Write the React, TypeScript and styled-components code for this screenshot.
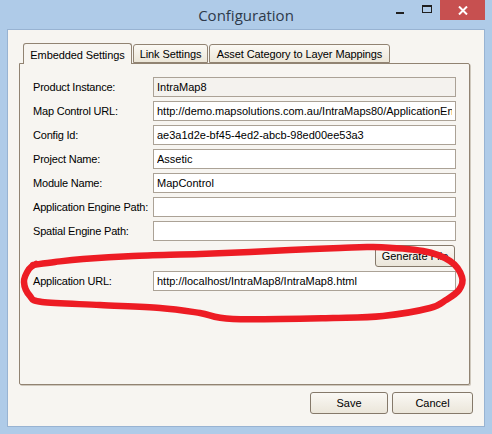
import React from 'react';
import styled, { createGlobalStyle } from 'styled-components';

const Global = createGlobalStyle`
  html, body { margin: 0; padding: 0; width: 492px; height: 434px; overflow: hidden; background: #afcbe8; }
  #root { width: 492px; height: 434px; }
  * { box-sizing: border-box; }
`;

const Window = styled.div`
  position: relative;
  width: 492px;
  height: 434px;
  background: #afcbe8;
  display: flex;
  flex-direction: column;
  font-family: "Liberation Sans", Arial, sans-serif;
  font-size: 11px;
  color: #000;
`;

const TitleBar = styled.div`
  height: 29px;
  flex: none;
  display: grid;
  grid-template-columns: 1fr auto 1fr;
  align-items: start;
`;

const Title = styled.div`
  grid-column: 2;
  font-family: "Open Sans", "Noto Sans", sans-serif;
  font-size: 15px;
  line-height: 20px;
  padding-top: 5px;
  color: #2e3a4a;
`;

const Controls = styled.div`
  grid-column: 3;
  justify-self: end;
  display: flex;
  margin-right: 7px;
`;

const CtlButton = styled.div<{ $close?: boolean }>`
  width: ${p => (p.$close ? 45 : 27)}px;
  height: 20px;
  display: flex;
  align-items: center;
  justify-content: center;
  background: ${p => (p.$close ? '#c75050' : 'transparent')};
`;

const MinGlyph = styled.div`
  width: 8px;
  height: 2px;
  margin-top: 5px;
  background: #1f1f1f;
`;

const MaxGlyph = styled.div`
  width: 10px;
  height: 8px;
  margin-top: -2px;
  border: 1px solid #1f1f1f;
  border-top-width: 2px;
`;

const Client = styled.div`
  flex: 1;
  margin: 0 7px 7px 7px;
  background: #f7f5f1;
  border: 1px solid #98b3d2;
  display: flex;
  flex-direction: column;
  padding: 13px 11px 12px 11px;
`;

const TabStrip = styled.div`
  display: flex;
  align-items: flex-end;
  height: 20px;
  padding-left: 4px;
  gap: 1px;
  position: relative;
  z-index: 1;
`;

const Tab = styled.div<{ $active?: boolean; $w: number }>`
  width: ${p => p.$w}px;
  height: ${p => (p.$active ? 21 : 19)}px;
  margin-bottom: ${p => (p.$active ? -1 : 0)}px;
  border: 1px solid #918372;
  border-bottom: ${p => (p.$active ? 'none' : '1px solid #918372')};
  border-radius: 3px 3px 0 0;
  background: ${p => (p.$active ? '#f7f5f1' : 'linear-gradient(#fbf9f4, #ece6d8)')};
  display: flex;
  align-items: center;
  justify-content: center;
  padding-top: ${p => (p.$active ? 1 : 0)}px;
  white-space: nowrap;
  letter-spacing: -0.1px;
`;

const Panel = styled.div`
  flex: 1;
  margin-right: 3px;
  border: 1px solid #918372;
  border-radius: 0 2px 2px 2px;
  background: #f7f5f1;
  box-shadow: 1px 1px 0 #cfc8bd;
  padding: 13px 13px 0 13px;
  display: flex;
  flex-direction: column;
  gap: 4px;
`;

const Row = styled.div`
  display: grid;
  grid-template-columns: 120px 1fr;
  align-items: center;
  height: 20px;
`;

const Label = styled.span`
  white-space: nowrap;
  letter-spacing: -0.2px;
`;

const Field = styled.input<{ $disabled?: boolean }>`
  height: 20px;
  width: 100%;
  margin: 0;
  border: 1px solid #aba296;
  border-radius: 0;
  outline: none;
  padding: 0 3px;
  font-family: "Liberation Sans", Arial, sans-serif;
  font-size: 11px;
  color: #000;
  background: ${p => (p.$disabled ? '#f4f2ee' : '#ffffff')};
`;

const ActionRow = styled.div`
  display: flex;
  justify-content: flex-end;
  padding-right: 1px;
`;

const Button = styled.div<{ $w: number }>`
  width: ${p => p.$w}px;
  height: 22px;
  border: 1px solid #85796a;
  border-radius: 3px;
  background: linear-gradient(#faf8f4, #ebe6da);
  display: flex;
  align-items: center;
  justify-content: center;
  white-space: nowrap;
`;

const Footer = styled.div`
  display: flex;
  justify-content: flex-end;
  gap: 4px;
  margin-top: 7px;
`;

const Overlay = styled.svg`
  position: absolute;
  left: 0;
  top: 0;
  width: 492px;
  height: 434px;
  pointer-events: none;
  z-index: 10;
`;

const fields: { label: string; value: string; disabled?: boolean }[] = [
  { label: 'Product Instance:', value: 'IntraMap8', disabled: true },
  { label: 'Map Control URL:', value: 'http://demo.mapsolutions.com.au/IntraMaps80/ApplicationEngine/' },
  { label: 'Config Id:', value: 'ae3a1d2e-bf45-4ed2-abcb-98ed00ee53a3' },
  { label: 'Project Name:', value: 'Assetic' },
  { label: 'Module Name:', value: 'MapControl' },
  { label: 'Application Engine Path:', value: '' },
  { label: 'Spatial Engine Path:', value: '' },
];

const pts: [number, number][] = [
  [33, 265], [55, 262], [83, 259], [133, 256], [200, 254], [250, 252], [290, 250],
  [340, 248], [373, 247], [423, 251], [450, 261], [462, 277], [459, 290], [446, 300],
  [430, 308], [383, 316], [333, 318], [233, 319], [200, 313], [160, 308], [100, 305],
  [42, 302], [30, 296], [24, 282], [29, 269], [36, 264],
];

function smoothPath(p: [number, number][]): string {
  let d = `M ${p[0][0]} ${p[0][1]}`;
  for (let i = 0; i < p.length - 1; i++) {
    const p0 = p[i - 1] || p[i];
    const p1 = p[i];
    const p2 = p[i + 1];
    const p3 = p[i + 2] || p2;
    const c1x = p1[0] + (p2[0] - p0[0]) / 6;
    const c1y = p1[1] + (p2[1] - p0[1]) / 6;
    const c2x = p2[0] - (p3[0] - p1[0]) / 6;
    const c2y = p2[1] - (p3[1] - p1[1]) / 6;
    d += ` C ${c1x.toFixed(1)} ${c1y.toFixed(1)} ${c2x.toFixed(1)} ${c2y.toFixed(1)} ${p2[0]} ${p2[1]}`;
  }
  return d;
}

export default function App() {
  return (
    <>
      <Global />
      <Window>
        <TitleBar>
          <Title>Configuration</Title>
          <Controls>
            <CtlButton><MinGlyph /></CtlButton>
            <CtlButton><MaxGlyph /></CtlButton>
            <CtlButton $close>
              <svg width="10" height="9" viewBox="0 0 10 9">
                <path d="M1 0.5 L9 8.5 M9 0.5 L1 8.5" stroke="#fff" strokeWidth="2" />
              </svg>
            </CtlButton>
          </Controls>
        </TitleBar>
        <Client>
          <TabStrip>
            <Tab $active $w={109}>Embedded Settings</Tab>
            <Tab $w={75}>Link Settings</Tab>
            <Tab $w={181}>Asset Category to Layer Mappings</Tab>
          </TabStrip>
          <Panel>
            {fields.map(f => (
              <Row key={f.label}>
                <Label>{f.label}</Label>
                <Field readOnly value={f.value} $disabled={f.disabled} />
              </Row>
            ))}
            <ActionRow>
              <Button $w={80}>Generate File</Button>
            </ActionRow>
            <Row>
              <Label>Application URL:</Label>
              <Field readOnly value="http://localhost/IntraMap8/IntraMap8.html" />
            </Row>
          </Panel>
          <Footer>
            <Button $w={78}>Save</Button>
            <Button $w={81}>Cancel</Button>
          </Footer>
        </Client>
        <Overlay viewBox="0 0 492 434">
          <path d={smoothPath(pts)} fill="none" stroke="#ed1c24" strokeWidth="6.5" strokeLinecap="round" strokeLinejoin="round" />
        </Overlay>
      </Window>
    </>
  );
}
